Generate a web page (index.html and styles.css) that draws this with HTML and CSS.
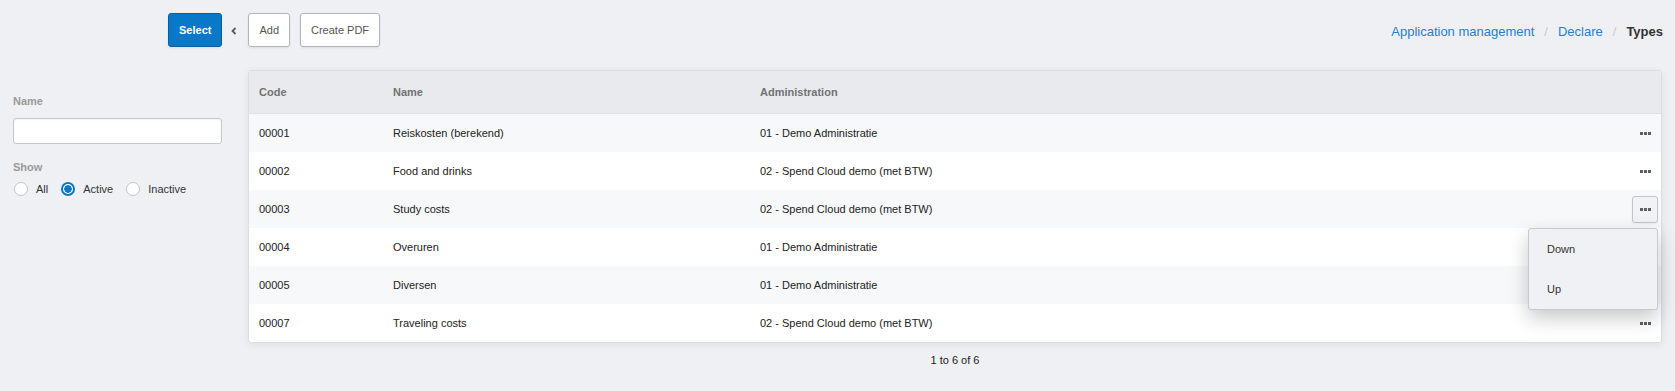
FILE: index.html
```html
<!DOCTYPE html>
<html lang="en">
<head>
  <meta charset="UTF-8">
  <title>Types</title>
  <link rel="stylesheet" href="styles.css">
</head>
<body>

  <!-- Toolbar -->
  <div class="toolbar">
    <div class="actions">
      <button class="btn btn-primary">Select</button>
      <span class="chevron">
        <svg width="6" height="8" viewBox="0 0 6 8"><path d="M4.5 1 L1.5 4 L4.5 7" fill="none" stroke="#5a5a5a" stroke-width="1.8"/></svg>
      </span>
      <button class="btn">Add</button>
      <button class="btn">Create PDF</button>
    </div>
    <div class="breadcrumb">
      <a href="#">Application management</a>
      <span class="sep">/</span>
      <a href="#">Declare</a>
      <span class="sep">/</span>
      <span class="current">Types</span>
    </div>
  </div>

  <div class="main">
    <!-- Filters -->
    <div class="sidebar">
      <div class="field-label">Name</div>
      <input class="text-input" type="text">
      <div class="field-label show-label">Show</div>
      <div class="radio-row">
        <span class="radio"></span><span class="radio-text">All</span>
        <span class="radio checked"></span><span class="radio-text">Active</span>
        <span class="radio"></span><span class="radio-text">Inactive</span>
      </div>
    </div>

    <!-- List -->
    <div class="content">
      <div class="table-box">
        <table class="grid">
          <colgroup>
            <col class="col-code">
            <col class="col-name">
            <col>
            <col class="col-actions">
          </colgroup>
          <thead>
            <tr><th>Code</th><th>Name</th><th>Administration</th><th></th></tr>
          </thead>
          <tbody id="rows"></tbody>
        </table>
      </div>
      <div class="pager">1 to 6 of 6</div>
    </div>
  </div>

  <script>
    const types = [
      { code: '00001', name: 'Reiskosten (berekend)', admin: '01 - Demo Administratie' },
      { code: '00002', name: 'Food and drinks', admin: '02 - Spend Cloud demo (met BTW)' },
      { code: '00003', name: 'Study costs', admin: '02 - Spend Cloud demo (met BTW)', open: true },
      { code: '00004', name: 'Overuren', admin: '01 - Demo Administratie' },
      { code: '00005', name: 'Diversen', admin: '01 - Demo Administratie' },
      { code: '00007', name: 'Traveling costs', admin: '02 - Spend Cloud demo (met BTW)' },
    ];

    const dots = '<svg width="11" height="3" viewBox="0 0 11 3"><rect x="0" y="0" width="3" height="3" fill="#5c5f66"/><rect x="4" y="0" width="3" height="3" fill="#5c5f66"/><rect x="8" y="0" width="3" height="3" fill="#5c5f66"/></svg>';

    const body = document.getElementById('rows');
    types.forEach(t => {
      const tr = document.createElement('tr');
      let menu = '';
      if (t.open) {
        menu = '<div class="menu"><div class="menu-item">Down</div><div class="menu-item">Up</div></div>';
      }
      tr.innerHTML = '<td>' + t.code + '</td><td>' + t.name + '</td><td>' + t.admin + '</td>' +
        '<td class="cell-actions"><span class="dots-btn' + (t.open ? ' open' : '') + '">' + dots + '</span>' + menu + '</td>';
      body.appendChild(tr);
    });
  </script>
</body>
</html>
```

FILE: styles.css
```css
body {
  font-family: 'Liberation Sans', Arial, sans-serif;
  font-size: 11px;
  margin: 0;
  padding: 0;
  background: #eff0f4;
  color: #222;
  overflow: hidden;
}

.toolbar {
  display: flex;
  justify-content: space-between;
  align-items: center;
  height: 60px;
  padding: 0 12px 0 168px;
}

.actions {
  display: flex;
  align-items: center;
}

.btn {
  font-family: inherit;
  font-size: 11px;
  height: 34px;
  padding: 0 10px;
  background: #fff;
  color: #555;
  border: 1px solid #b4b5b9;
  border-radius: 3px;
  box-shadow: 0 1px 3px rgba(0, 0, 0, 0.08);
  margin-right: 10px;
  cursor: pointer;
}

.btn-primary {
  background: #0a78c9;
  border-color: #0a5fa0;
  color: #fff;
  font-weight: 700;
  padding: 0 10px;
  margin-right: 0;
}

.chevron {
  display: flex;
  align-items: center;
  margin: 2px 11px 0 9px;
}

.breadcrumb {
  font-size: 13px;
  display: flex;
  align-items: center;
  padding-top: 2px;
}

.breadcrumb a {
  color: #1f7fd2;
  text-decoration: none;
}

.breadcrumb .sep {
  color: #c8c9cc;
  margin: 0 10px;
}

.breadcrumb .current {
  color: #333;
  font-weight: 700;
}

.main {
  display: flex;
  gap: 26px;
  padding: 10px 13px 0 13px;
}

.sidebar {
  width: 209px;
  flex-shrink: 0;
  padding-top: 25px;
}

.field-label {
  color: #9a9a9a;
  font-weight: 700;
  line-height: 13px;
}

.text-input {
  display: block;
  box-sizing: border-box;
  width: 209px;
  height: 26px;
  margin: 10px 0 17px;
  border: 1px solid #c6c7cb;
  border-radius: 3px;
  background: #fff;
  box-shadow: inset 0 1px 2px rgba(0, 0, 0, 0.05);
}

.radio-row {
  display: flex;
  align-items: center;
  margin-top: 8px;
  padding-left: 1px;
}

.radio {
  box-sizing: border-box;
  width: 14px;
  height: 14px;
  border: 1px solid #c3c4c8;
  border-radius: 50%;
  background: #fff;
  margin-right: 8px;
}

.radio.checked {
  border: 2px solid #0a78c9;
  background: radial-gradient(circle, #0a78c9 0, #0a78c9 3.5px, #fff 4px);
}

.radio-text {
  color: #333;
  margin-right: 13px;
}

.content {
  flex: 1;
}

.table-box {
  background: #fff;
  border: 1px solid #dcdde1;
  border-radius: 3px;
  box-shadow: 0 2px 8px rgba(0, 0, 0, 0.07);
}

.grid {
  width: 100%;
  border-collapse: collapse;
  table-layout: fixed;
}

.col-code {
  width: 134px;
}

.col-name {
  width: 367px;
}

.col-actions {
  width: 37px;
}

.grid th {
  height: 42px;
  padding: 0 0 0 10px;
  text-align: left;
  color: #727272;
  font-weight: 700;
  background: #e9eaee;
  border-bottom: 1px solid #dfe0e4;
}

.grid td {
  height: 38px;
  padding: 0 0 0 10px;
  color: #222;
}

.grid tbody tr:nth-child(odd) td {
  background: #f7f8fa;
}

.cell-actions {
  position: relative;
  text-align: right;
}

.grid td.cell-actions {
  padding: 0 3px 0 0;
}

.dots-btn {
  display: inline-flex;
  align-items: center;
  justify-content: center;
  box-sizing: border-box;
  width: 26px;
  height: 27px;
  vertical-align: middle;
  border: 1px solid transparent;
  border-radius: 3px;
}

.dots-btn.open {
  background: #f1f2f5;
  border-color: #c4c5c9;
  box-shadow: 0 1px 2px rgba(0, 0, 0, 0.06);
}

.menu {
  position: absolute;
  top: 38px;
  right: 3px;
  width: 130px;
  box-sizing: border-box;
  background: #f0f1f4;
  border: 1px solid #c9cacf;
  border-radius: 3px;
  box-shadow: 0 8px 20px rgba(0, 0, 0, 0.22);
  text-align: left;
  z-index: 10;
}

.menu-item {
  height: 40px;
  line-height: 40px;
  padding-left: 18px;
  color: #333;
}

.pager {
  text-align: center;
  margin-top: 11px;
  color: #222;
}
```
